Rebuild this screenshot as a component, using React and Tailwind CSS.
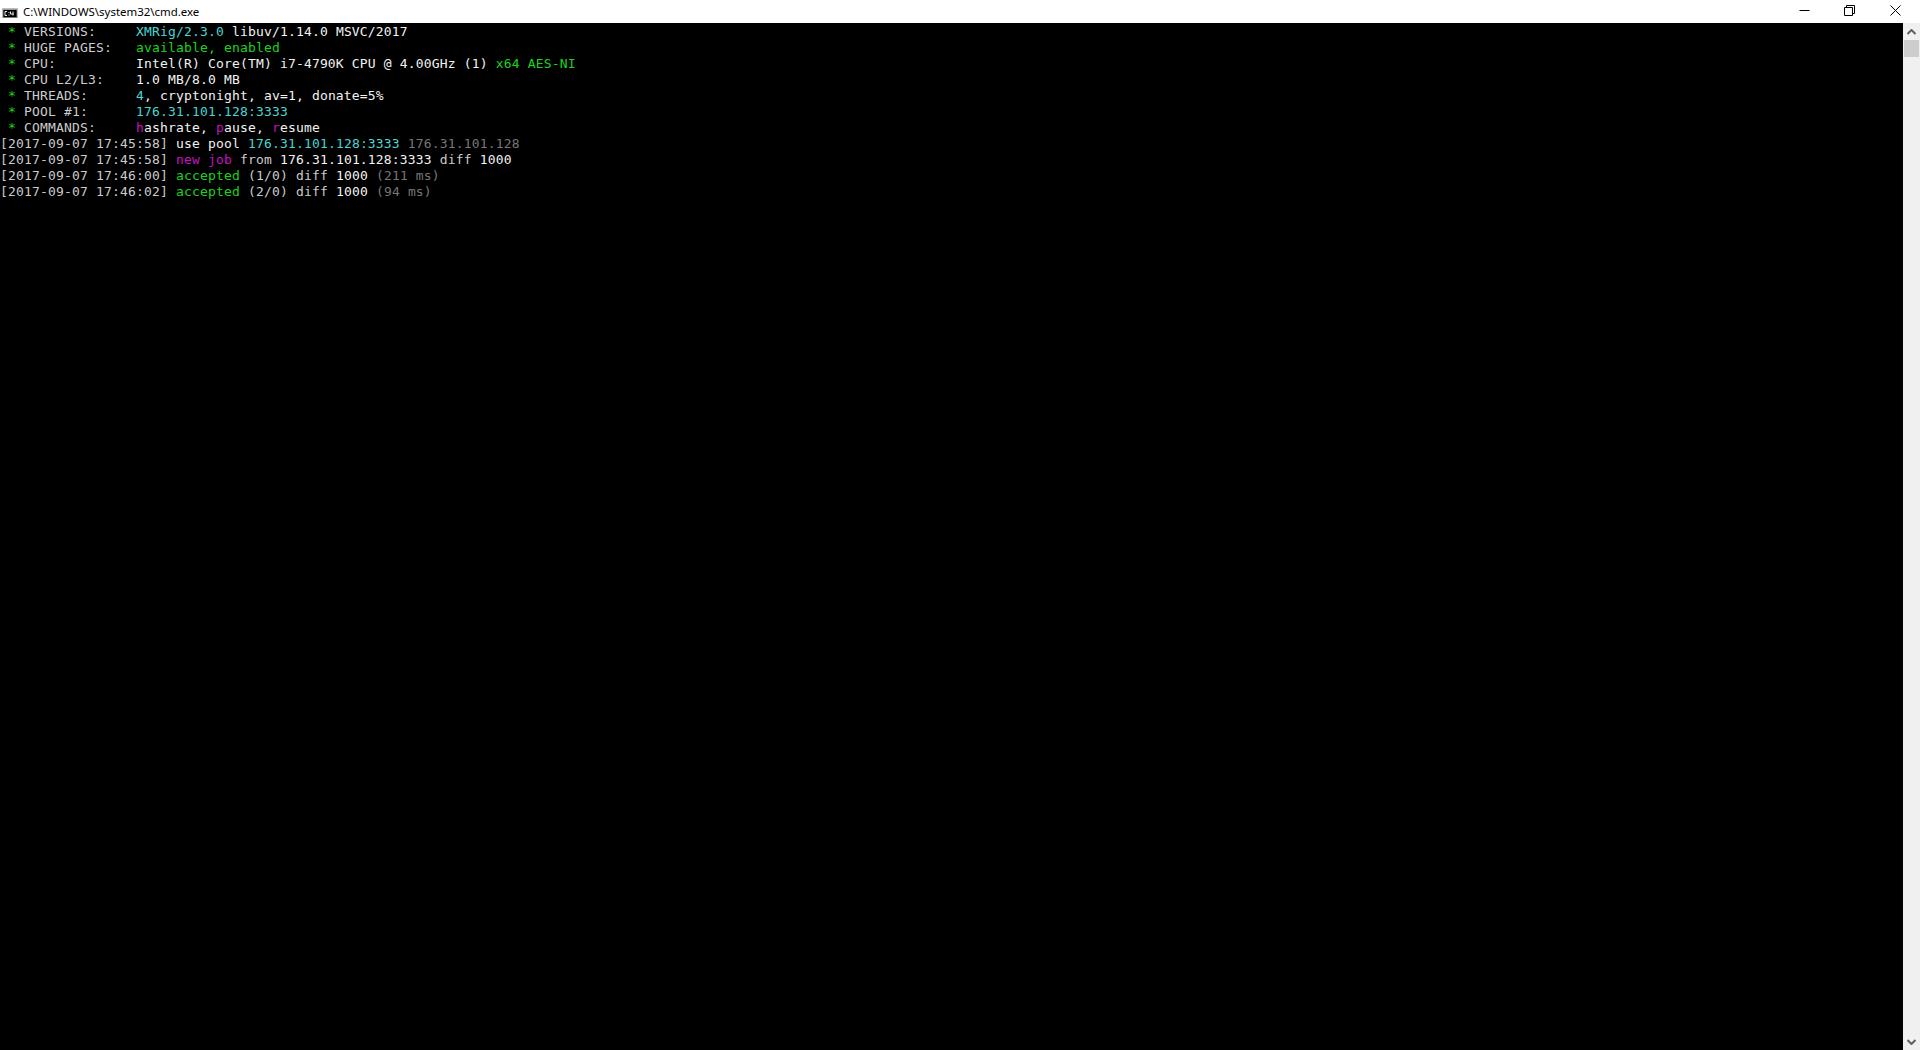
const green = 'text-[#1ad41c]';
const cyan = 'text-[#4ad6d6]';
const magenta = 'text-[#c414c0]';
const gray = 'text-[#767676]';
const white = 'text-[#f2f2f2]';

const Row = ({ children }) => (
  <div className="h-4 leading-4 whitespace-pre">{children}</div>
);

const Header = ({ label, children }) => (
  <Row>
    {' '}<span className={green}>*</span>{' ' + label.padEnd(14, ' ')}{children}
  </Row>
);

const Log = ({ time, children }) => (
  <Row>
    {`[2017-09-07 ${time}] `}{children}
  </Row>
);

const CmdIcon = () => (
  <svg width="16" height="17" viewBox="0 0 16 17" className="shrink-0">
    <rect x="0.5" y="5" width="15" height="10" fill="#7a7a7a" />
    <rect x="0.5" y="5" width="15" height="1.5" fill="#bdbdbd" />
    <rect x="1.5" y="7" width="13" height="7" fill="#000" />
    <path d="M5 8.5H3v4h2M7 9v1M7 11.5v1M8.5 8.5v2.5h3M11 8.5v4" stroke="#f0f0f0" strokeWidth="1" fill="none" />
  </svg>
);

const App = () => {
  return (
    <div className="h-[1050px] w-[1920px] flex flex-col bg-black overflow-hidden">
      <div className="h-[23px] bg-white flex items-center justify-between shrink-0">
        <div className="flex items-center gap-[5px] pl-[2px]">
          <CmdIcon />
          <span className="text-[11.45px] text-black font-['Noto_Sans',sans-serif]">C:\WINDOWS\system32\cmd.exe</span>
        </div>
        <div className="flex items-center pr-[2px] pb-[3px]">
          <button className="w-[43px] h-[20px] flex items-center justify-center">
            <svg width="11" height="11" viewBox="0 0 11 11"><path d="M0.5 5.5h10" stroke="#000" fill="none" /></svg>
          </button>
          <button className="w-[47px] h-[20px] flex items-center justify-center">
            <svg width="11" height="11" viewBox="0 0 11 11"><path d="M0.5 2.5h8v8h-8zM2.5 2.5v-2h8v8h-2" stroke="#000" fill="none" /></svg>
          </button>
          <button className="w-[45px] h-[20px] flex items-center justify-center">
            <svg width="11" height="11" viewBox="0 0 11 11"><path d="M0.5 0.5l10 10M10.5 0.5l-10 10" stroke="#000" fill="none" /></svg>
          </button>
        </div>
      </div>
      <div className="flex-1 flex min-h-0">
        <div className="flex-1 pt-px text-[13px] tracking-[0.17px] text-[#cccccc] font-['DejaVu_Sans_Mono',monospace]">
          <Header label="VERSIONS:">
            <span className={cyan}>XMRig/2.3.0</span>{' '}<span className={white}>libuv/1.14.0 MSVC/2017</span>
          </Header>
          <Header label="HUGE PAGES:">
            <span className={green}>available, enabled</span>
          </Header>
          <Header label="CPU:">
            <span className={white}>Intel(R) Core(TM) i7-4790K CPU @ 4.00GHz (1)</span>{' '}<span className={green}>x64 AES-NI</span>
          </Header>
          <Header label="CPU L2/L3:">
            <span className={white}>1.0 MB/8.0 MB</span>
          </Header>
          <Header label="THREADS:">
            <span className={cyan}>4</span><span className={white}>, cryptonight, av=1, donate=5%</span>
          </Header>
          <Header label="POOL #1:">
            <span className={cyan}>176.31.101.128:3333</span>
          </Header>
          <Header label="COMMANDS:">
            <span className={magenta}>h</span><span className={white}>ashrate, </span>
            <span className={magenta}>p</span><span className={white}>ause, </span>
            <span className={magenta}>r</span><span className={white}>esume</span>
          </Header>
          <Log time="17:45:58">
            <span className={white}>use pool </span><span className={cyan}>176.31.101.128:3333</span>{' '}<span className={gray}>176.31.101.128</span>
          </Log>
          <Log time="17:45:58">
            <span className={magenta}>new job</span>{' from '}<span className={white}>176.31.101.128:3333</span>{' diff '}<span className={white}>1000</span>
          </Log>
          <Log time="17:46:00">
            <span className={green}>accepted</span>{' (1/0) diff '}<span className={white}>1000</span>{' '}<span className={gray}>(211 ms)</span>
          </Log>
          <Log time="17:46:02">
            <span className={green}>accepted</span>{' (2/0) diff '}<span className={white}>1000</span>{' '}<span className={gray}>(94 ms)</span>
          </Log>
        </div>
        <div className="w-[17px] bg-[#f0f0f0] flex flex-col items-center shrink-0">
          <div className="h-[17px] w-full flex items-center justify-center">
            <svg width="9" height="6" viewBox="0 0 9 6"><path d="M0.5 5L4.5 1l4 4" stroke="#606060" strokeWidth="2" fill="none" /></svg>
          </div>
          <div className="h-[17px] w-[15px] bg-[#cdcdcd]" />
          <div className="flex-1" />
          <div className="h-[17px] w-full flex items-center justify-center">
            <svg width="9" height="6" viewBox="0 0 9 6"><path d="M0.5 1L4.5 5l4-4" stroke="#606060" strokeWidth="2" fill="none" /></svg>
          </div>
        </div>
      </div>
    </div>
  );
};

export default App;
